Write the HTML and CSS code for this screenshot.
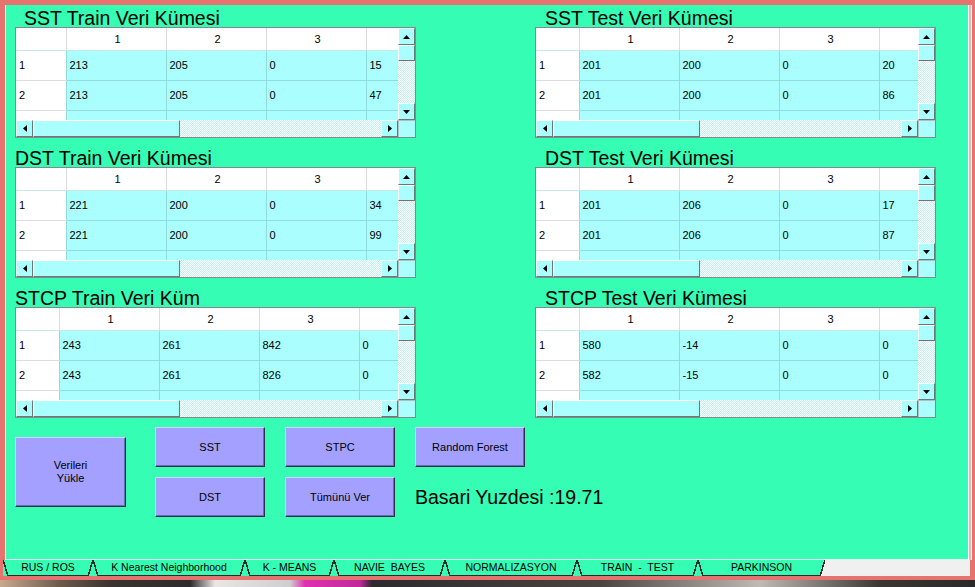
FILE: index.html
```html
<!DOCTYPE html>
<html lang="tr">
<head>
  <meta charset="UTF-8" />
  <title>Veri Kümeleri</title>
  <link rel="stylesheet" href="styles.css">
</head>
<body>
  <div class="window">
    <div class="panel">
      <div class="datasets">

        <section class="dataset">
          <h2 class="title indent-sm">SST Train Veri Kümesi</h2>
          <div class="grid">
            <div class="view">
              <table class="cells">
                <colgroup><col class="c-head"><col class="c"><col class="c"><col class="c"><col class="c"></colgroup>
                <tr class="hdr"><th></th><th>1</th><th>2</th><th>3</th><th></th></tr>
                <tr><th>1</th><td>213</td><td>205</td><td>0</td><td>15</td></tr>
                <tr><th>2</th><td>213</td><td>205</td><td>0</td><td>47</td></tr>
                <tr><th></th><td></td><td></td><td></td><td></td></tr>
              </table>
            </div>
            <div class="vscroll">
              <span class="sbtn"><svg width="7" height="4" viewBox="0 0 7 4"><polygon points="0,4 3.5,0 7,4"/></svg></span>
              <span class="thumb"></span>
              <span class="track"></span>
              <span class="sbtn"><svg width="7" height="4" viewBox="0 0 7 4"><polygon points="0,0 3.5,4 7,0"/></svg></span>
            </div>
            <div class="hscroll">
              <span class="sbtn"><svg width="4" height="7" viewBox="0 0 4 7"><polygon points="4,0 0,3.5 4,7"/></svg></span>
              <span class="thumb"></span>
              <span class="track"></span>
              <span class="sbtn"><svg width="4" height="7" viewBox="0 0 4 7"><polygon points="0,0 4,3.5 0,7"/></svg></span>
            </div>
            <div class="corner"></div>
          </div>
        </section>

        <section class="dataset">
          <h2 class="title indent">SST Test Veri Kümesi</h2>
          <div class="grid narrow">
            <div class="view">
              <table class="cells">
                <colgroup><col class="c-head"><col class="c"><col class="c"><col class="c"><col class="c"></colgroup>
                <tr class="hdr"><th></th><th>1</th><th>2</th><th>3</th><th></th></tr>
                <tr><th>1</th><td>201</td><td>200</td><td>0</td><td>20</td></tr>
                <tr><th>2</th><td>201</td><td>200</td><td>0</td><td>86</td></tr>
                <tr><th></th><td></td><td></td><td></td><td></td></tr>
              </table>
            </div>
            <div class="vscroll">
              <span class="sbtn"><svg width="7" height="4" viewBox="0 0 7 4"><polygon points="0,4 3.5,0 7,4"/></svg></span>
              <span class="thumb"></span>
              <span class="track"></span>
              <span class="sbtn"><svg width="7" height="4" viewBox="0 0 7 4"><polygon points="0,0 3.5,4 7,0"/></svg></span>
            </div>
            <div class="hscroll">
              <span class="sbtn"><svg width="4" height="7" viewBox="0 0 4 7"><polygon points="4,0 0,3.5 4,7"/></svg></span>
              <span class="thumb"></span>
              <span class="track"></span>
              <span class="sbtn"><svg width="4" height="7" viewBox="0 0 4 7"><polygon points="0,0 4,3.5 0,7"/></svg></span>
            </div>
            <div class="corner"></div>
          </div>
        </section>

        <section class="dataset">
          <h2 class="title">DST Train Veri Kümesi</h2>
          <div class="grid">
            <div class="view">
              <table class="cells">
                <colgroup><col class="c-head"><col class="c"><col class="c"><col class="c"><col class="c"></colgroup>
                <tr class="hdr"><th></th><th>1</th><th>2</th><th>3</th><th></th></tr>
                <tr><th>1</th><td>221</td><td>200</td><td>0</td><td>34</td></tr>
                <tr><th>2</th><td>221</td><td>200</td><td>0</td><td>99</td></tr>
                <tr><th></th><td></td><td></td><td></td><td></td></tr>
              </table>
            </div>
            <div class="vscroll">
              <span class="sbtn"><svg width="7" height="4" viewBox="0 0 7 4"><polygon points="0,4 3.5,0 7,4"/></svg></span>
              <span class="thumb"></span>
              <span class="track"></span>
              <span class="sbtn"><svg width="7" height="4" viewBox="0 0 7 4"><polygon points="0,0 3.5,4 7,0"/></svg></span>
            </div>
            <div class="hscroll">
              <span class="sbtn"><svg width="4" height="7" viewBox="0 0 4 7"><polygon points="4,0 0,3.5 4,7"/></svg></span>
              <span class="thumb"></span>
              <span class="track"></span>
              <span class="sbtn"><svg width="4" height="7" viewBox="0 0 4 7"><polygon points="0,0 4,3.5 0,7"/></svg></span>
            </div>
            <div class="corner"></div>
          </div>
        </section>

        <section class="dataset">
          <h2 class="title indent">DST Test Veri Kümesi</h2>
          <div class="grid narrow">
            <div class="view">
              <table class="cells">
                <colgroup><col class="c-head"><col class="c"><col class="c"><col class="c"><col class="c"></colgroup>
                <tr class="hdr"><th></th><th>1</th><th>2</th><th>3</th><th></th></tr>
                <tr><th>1</th><td>201</td><td>206</td><td>0</td><td>17</td></tr>
                <tr><th>2</th><td>201</td><td>206</td><td>0</td><td>87</td></tr>
                <tr><th></th><td></td><td></td><td></td><td></td></tr>
              </table>
            </div>
            <div class="vscroll">
              <span class="sbtn"><svg width="7" height="4" viewBox="0 0 7 4"><polygon points="0,4 3.5,0 7,4"/></svg></span>
              <span class="thumb"></span>
              <span class="track"></span>
              <span class="sbtn"><svg width="7" height="4" viewBox="0 0 7 4"><polygon points="0,0 3.5,4 7,0"/></svg></span>
            </div>
            <div class="hscroll">
              <span class="sbtn"><svg width="4" height="7" viewBox="0 0 4 7"><polygon points="4,0 0,3.5 4,7"/></svg></span>
              <span class="thumb"></span>
              <span class="track"></span>
              <span class="sbtn"><svg width="4" height="7" viewBox="0 0 4 7"><polygon points="0,0 4,3.5 0,7"/></svg></span>
            </div>
            <div class="corner"></div>
          </div>
        </section>

        <section class="dataset">
          <h2 class="title">STCP Train Veri Küm</h2>
          <div class="grid narrow">
            <div class="view">
              <table class="cells">
                <colgroup><col class="c-head"><col class="c"><col class="c"><col class="c"><col class="c"></colgroup>
                <tr class="hdr"><th></th><th>1</th><th>2</th><th>3</th><th></th></tr>
                <tr><th>1</th><td>243</td><td>261</td><td>842</td><td>0</td></tr>
                <tr><th>2</th><td>243</td><td>261</td><td>826</td><td>0</td></tr>
                <tr><th></th><td></td><td></td><td></td><td></td></tr>
              </table>
            </div>
            <div class="vscroll">
              <span class="sbtn"><svg width="7" height="4" viewBox="0 0 7 4"><polygon points="0,4 3.5,0 7,4"/></svg></span>
              <span class="thumb"></span>
              <span class="track"></span>
              <span class="sbtn"><svg width="7" height="4" viewBox="0 0 7 4"><polygon points="0,0 3.5,4 7,0"/></svg></span>
            </div>
            <div class="hscroll">
              <span class="sbtn"><svg width="4" height="7" viewBox="0 0 4 7"><polygon points="4,0 0,3.5 4,7"/></svg></span>
              <span class="thumb"></span>
              <span class="track"></span>
              <span class="sbtn"><svg width="4" height="7" viewBox="0 0 4 7"><polygon points="0,0 4,3.5 0,7"/></svg></span>
            </div>
            <div class="corner"></div>
          </div>
        </section>

        <section class="dataset">
          <h2 class="title indent">STCP Test Veri Kümesi</h2>
          <div class="grid narrow">
            <div class="view">
              <table class="cells">
                <colgroup><col class="c-head"><col class="c"><col class="c"><col class="c"><col class="c"></colgroup>
                <tr class="hdr"><th></th><th>1</th><th>2</th><th>3</th><th></th></tr>
                <tr><th>1</th><td>580</td><td>-14</td><td>0</td><td>0</td></tr>
                <tr><th>2</th><td>582</td><td>-15</td><td>0</td><td>0</td></tr>
                <tr><th></th><td></td><td></td><td></td><td></td></tr>
              </table>
            </div>
            <div class="vscroll">
              <span class="sbtn"><svg width="7" height="4" viewBox="0 0 7 4"><polygon points="0,4 3.5,0 7,4"/></svg></span>
              <span class="thumb"></span>
              <span class="track"></span>
              <span class="sbtn"><svg width="7" height="4" viewBox="0 0 7 4"><polygon points="0,0 3.5,4 7,0"/></svg></span>
            </div>
            <div class="hscroll">
              <span class="sbtn"><svg width="4" height="7" viewBox="0 0 4 7"><polygon points="4,0 0,3.5 4,7"/></svg></span>
              <span class="thumb"></span>
              <span class="track"></span>
              <span class="sbtn"><svg width="4" height="7" viewBox="0 0 4 7"><polygon points="0,0 4,3.5 0,7"/></svg></span>
            </div>
            <div class="corner"></div>
          </div>
        </section>

      </div>

      <div class="actions">
        <button class="btn btn-load">Verileri<br>Yükle</button>
        <button class="btn col-2 row-1">SST</button>
        <button class="btn col-3 row-1">STPC</button>
        <button class="btn col-4 row-1">Random Forest</button>
        <button class="btn col-2 row-2">DST</button>
        <button class="btn col-3 row-2">Tümünü Ver</button>
        <div class="score">Basari Yuzdesi :19.71</div>
      </div>
    </div>

    <div class="tabs">
      <span class="tab" style="width: 90px">RUS / ROS</span>
      <span class="tab" style="width: 152px">K Nearest Neighborhood</span>
      <span class="tab" style="width: 89px">K - MEANS</span>
      <span class="tab" style="width: 111px">NAVIE  BAYES</span>
      <span class="tab" style="width: 132px">NORMALIZASYON</span>
      <span class="tab" style="width: 121px">TRAIN  -  TEST</span>
      <span class="tab tab-last" style="width: 127px">PARKINSON</span>
      <span class="tab-rest"></span>
    </div>
  </div>
  <div class="desktop"></div>
</body>
</html>
```

FILE: styles.css
```css
:root {
  --frame: #e6736f;
  --panel: #35fdb3;
  --cell: #abfefe;
  --button: #a3a0ff;
  --line: #90dcdc;
}

* {
  box-sizing: border-box;
}

body {
  margin: 0;
  width: 975px;
  height: 587px;
  overflow: hidden;
  background-color: var(--frame);
  font-family: "Liberation Sans", Arial, sans-serif;
  color: #000;
}

.window {
  padding: 5px 0 0 3px;
}

.panel {
  margin-left: 2px;
  width: 964px;
  height: 555px;
  background-color: var(--panel);
  border-left: 1px solid #c9f5df;
  border-right: 1px solid #fff;
  border-bottom: 1px solid #e9fff4;
  box-shadow: 2px 0 0 #f3b3b0, 3px 0 0 #fff;
}

.datasets {
  display: grid;
  grid-template-columns: 400px 400px;
  column-gap: 120px;
  row-gap: 7px;
  padding-left: 9px;
}

.title {
  margin: 0;
  height: 22px;
  padding-top: 5px;
  font-size: 19.5px;
  font-weight: normal;
  line-height: 17px;
  white-space: nowrap;
}

.indent-sm {
  padding-left: 9px;
}

.indent {
  padding-left: 10px;
}

/* data grid */

.grid {
  display: grid;
  grid-template-columns: 382px 17px;
  grid-template-rows: 92px 17px;
  width: 401px;
  border: 1px solid #7f8a8a;
  background-color: #fff;
}

.view {
  overflow: hidden;
}

.cells {
  border-collapse: collapse;
  border-style: hidden;
  table-layout: fixed;
  width: 450px;
  font-size: 11px;
}

.c-head {
  width: 50px;
}

.c {
  width: 100px;
}

.narrow .cells {
  width: 443px;
}

.narrow .c-head {
  width: 43px;
}

.cells tr {
  height: 30px;
}

.cells tr.hdr {
  height: 22px;
}

.cells th,
.cells td {
  padding: 0 0 0 3px;
  font-weight: normal;
  text-align: left;
  white-space: nowrap;
  overflow: hidden;
}

.cells th {
  background-color: #fff;
  border-bottom: 1px solid #dcdcdc;
}

.cells td {
  background-color: var(--cell);
  border: 1px solid var(--line);
}

.cells .hdr th {
  text-align: center;
  border-right: 1px solid #dcdcdc;
  border-bottom: 1px solid #c8e8e8;
}

/* scrollbars */

.vscroll,
.hscroll {
  display: flex;
  background-color: #fff;
}

.vscroll {
  flex-direction: column;
}

.sbtn,
.thumb {
  flex: none;
  display: flex;
  align-items: center;
  justify-content: center;
  width: 17px;
  height: 17px;
  background-color: var(--cell);
  border: 1px solid;
  border-color: #fff #6e7676 #6e7676 #fff;
}

.vscroll .thumb {
  height: 16px;
}

.hscroll .thumb {
  width: 147px;
}

.track {
  flex: 1;
  background: repeating-conic-gradient(#c4f2f2 0 25%, #fff 0 50%) 0 0 / 2px 2px;
}

.corner {
  background-color: var(--cell);
  border-top: 1px solid #b0c0c0;
  border-left: 1px solid #b0c0c0;
}

/* buttons */

.actions {
  display: grid;
  grid-template-columns: 120px 110px 110px 110px 200px;
  grid-template-rows: 40px 40px;
  column-gap: 20px;
  row-gap: 10px;
  margin-top: 9px;
  padding-left: 9px;
}

.btn {
  padding: 0;
  background-color: var(--button);
  border: 1px solid;
  border-color: #d6d4ff #2f2f48 #2f2f48 #d6d4ff;
  box-shadow: inset -1px -1px 0 #6a68b4;
  font-family: "Liberation Sans", Arial, sans-serif;
  font-size: 11px;
  line-height: 13px;
  color: #000;
}

.col-2 { grid-column: 2; }
.col-3 { grid-column: 3; }
.col-4 { grid-column: 4; }
.row-1 { grid-row: 1; }
.row-2 { grid-row: 2; }

.btn-load {
  grid-column: 1;
  grid-row: 1 / 3;
  align-self: center;
  width: 111px;
  height: 70px;
}

.score {
  grid-column: 4 / 6;
  grid-row: 2;
  align-self: center;
  font-size: 19.5px;
  white-space: nowrap;
}

/* tab strip */

.tabs {
  display: flex;
  width: 967px;
  height: 16px;
  background-color: var(--panel);
}

.tab {
  flex: none;
  height: 16px;
  line-height: 15px;
  font-size: 10.5px;
  text-align: center;
  white-space: pre;
  background-image:
    linear-gradient(to top right, transparent calc(50% - 0.8px), #2a2a2a calc(50% - 0.8px), #2a2a2a calc(50% + 0.8px), transparent calc(50% + 0.8px)),
    linear-gradient(to top left, transparent calc(50% - 0.8px), #2a2a2a calc(50% - 0.8px), #2a2a2a calc(50% + 0.8px), transparent calc(50% + 0.8px)),
    linear-gradient(#2a2a2a, #2a2a2a);
  background-size: 5px 16px, 5px 16px, calc(100% - 10px) 1px;
  background-position: left top, right top, 5px bottom;
  background-repeat: no-repeat;
}

.tab-last {
  background-image:
    linear-gradient(to top right, transparent calc(50% - 0.8px), #2a2a2a calc(50% - 0.8px), #2a2a2a calc(50% + 0.8px), transparent calc(50% + 0.8px)),
    linear-gradient(to top left, #f0f0f0 calc(50% - 0.8px), #2a2a2a calc(50% - 0.8px), #2a2a2a calc(50% + 0.8px), transparent calc(50% + 0.8px)),
    linear-gradient(#2a2a2a, #2a2a2a);
}

.tab-rest {
  flex: 1;
  background-color: #f0f0f0;
}

.desktop {
  height: 7px;
  margin-top: 4px;
  background: linear-gradient(to right, #c9a98e 0, #6b5a4c 60px, #3a3330 110px, #2b2b2b 190px, #e9e6e4 215px, #cfcfcf 290px, #e030b0 305px, #c02a9a 360px, #2c2a2e 372px, #4a4440 600px, #bfbab4 760px, #3a3632 880px, #2a2a2a 975px);
}
```
